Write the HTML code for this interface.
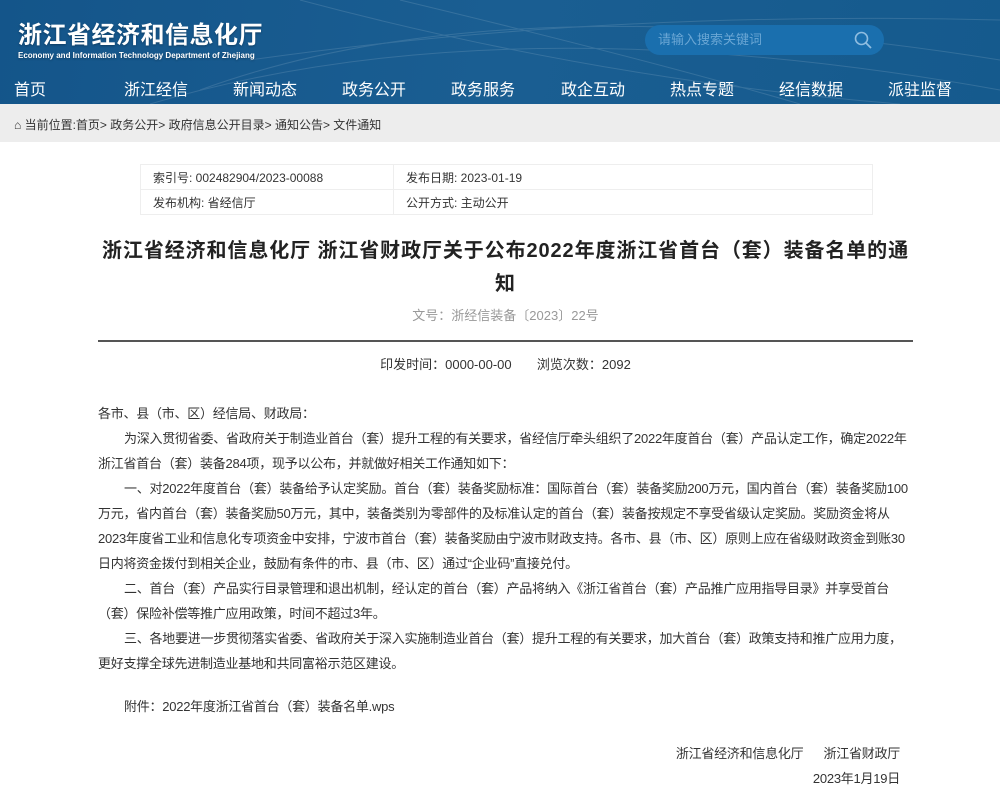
<!DOCTYPE html>
<html><head><meta charset="utf-8"><style>
*{margin:0;padding:0;box-sizing:border-box}
body{width:1000px;height:805px;overflow:hidden;background:#fff;font-family:"Liberation Sans","Noto Sans CJK SC",sans-serif;color:#333}
.hd{height:104px;background:linear-gradient(100deg,#14558a 0%,#1a5e92 50%,#155a8d 100%);position:relative;overflow:hidden}
.logo{position:absolute;left:18px;top:15px;color:#fff;font-size:24px;font-weight:bold;letter-spacing:0.5px;text-shadow:0 1px 2px rgba(0,0,0,.3)}
.logo small{display:block;font-size:8px;font-weight:bold;letter-spacing:0;margin-top:1px}
.search{position:absolute;left:645px;top:25px;width:239px;height:30px;border-radius:15px;background:#1a6fae;color:#6aa6d4;font-size:13px;line-height:30px;padding-left:13px}
.search svg{position:absolute;right:12px;top:6px}
.nav{position:absolute;top:76px;left:0;width:1000px;height:28px}
.nav span{position:absolute;color:#fff;font-size:16px;top:0}
.nav .on{border-bottom:3px solid #fff;padding-bottom:4px}
.bc{height:38px;background:#ededed;font-size:12px;line-height:42px;padding-left:14px;color:#333}
table{position:absolute;left:140px;top:164px;width:733px;border-collapse:collapse;font-size:12px}
td{border:1px solid #eee;height:25px;padding-left:12px;color:#333}
.t{position:absolute;left:98px;width:815px;text-align:center}
p{font-size:13px;line-height:25px;letter-spacing:-0.25px}
</style></head><body>
<div class="hd">
<svg width="1000" height="104" style="position:absolute;left:0;top:0;opacity:.12"><g fill="none" stroke="#fff" stroke-width="1"><path d="M200 90 Q500 -20 1000 60"/><path d="M150 104 Q500 0 1000 90"/><path d="M300 0 Q600 80 900 104"/><path d="M400 0 Q650 60 800 104"/><path d="M250 60 Q600 10 1000 20"/></g></svg>
<div class="logo">浙江省经济和信息化厅<small>Economy and Information Technology Department of Zhejiang</small></div>
<div class="search">请输入搜索关键词<svg width="18" height="18" viewBox="0 0 18 18"><circle cx="7.5" cy="7.5" r="6" fill="none" stroke="#8fbde0" stroke-width="1.6"/><path d="M12 12l5 5" stroke="#8fbde0" stroke-width="1.8"/></svg></div>
<div class="nav">
<span class="on" style="left:14px">首页</span>
<span style="left:124px">浙江经信</span><span style="left:233px">新闻动态</span><span style="left:342px">政务公开</span><span style="left:451px">政务服务</span><span style="left:561px">政企互动</span><span style="left:670px">热点专题</span><span style="left:779px">经信数据</span><span style="left:888px">派驻监督</span>
</div></div>
<div class="bc">⌂ 当前位置:首页&gt; 政务公开&gt; 政府信息公开目录&gt; 通知公告&gt; 文件通知</div>
<table><tr><td style="width:253px">索引号: 002482904/2023-00088</td><td>发布日期: 2023-01-19</td></tr><tr><td>发布机构: 省经信厅</td><td>公开方式: 主动公开</td></tr></table>
<div class="t" style="top:235px;font-size:20px;font-weight:bold;line-height:33px;color:#222;letter-spacing:0.9px">浙江省经济和信息化厅 浙江省财政厅关于公布2022年度浙江省首台（套）装备名单的通知</div>
<div class="t" style="top:305px;font-size:13px;color:#999">文号：浙经信装备〔2023〕22号</div>
<div style="position:absolute;left:98px;top:340px;width:815px;height:2px;background:#555"></div>
<div class="t" style="top:354px;font-size:13px;color:#333">印发时间：0000-00-00&nbsp;&nbsp;&nbsp;&nbsp;&nbsp;&nbsp;&nbsp;浏览次数：2092</div>
<div style="position:absolute;left:98px;top:401px;width:815px">
<p>各市、县（市、区）经信局、财政局：</p>
<p style="text-indent:26px">为深入贯彻省委、省政府关于制造业首台（套）提升工程的有关要求，省经信厅牵头组织了2022年度首台（套）产品认定工作，确定2022年浙江省首台（套）装备284项，现予以公布，并就做好相关工作通知如下：</p>
<p style="text-indent:26px">一、对2022年度首台（套）装备给予认定奖励。首台（套）装备奖励标准：国际首台（套）装备奖励200万元，国内首台（套）装备奖励100万元，省内首台（套）装备奖励50万元，其中，装备类别为零部件的及标准认定的首台（套）装备按规定不享受省级认定奖励。奖励资金将从2023年度省工业和信息化专项资金中安排，宁波市首台（套）装备奖励由宁波市财政支持。各市、县（市、区）原则上应在省级财政资金到账30日内将资金拨付到相关企业，鼓励有条件的市、县（市、区）通过“企业码”直接兑付。</p>
<p style="text-indent:26px">二、首台（套）产品实行目录管理和退出机制，经认定的首台（套）产品将纳入《浙江省首台（套）产品推广应用指导目录》并享受首台（套）保险补偿等推广应用政策，时间不超过3年。</p>
<p style="text-indent:26px">三、各地要进一步贯彻落实省委、省政府关于深入实施制造业首台（套）提升工程的有关要求，加大首台（套）政策支持和推广应用力度，更好支撑全球先进制造业基地和共同富裕示范区建设。</p>
<p style="margin-top:18px;text-indent:26px">附件：2022年度浙江省首台（套）装备名单.wps</p>
<p style="margin-top:22px;text-align:right;padding-right:13px">浙江省经济和信息化厅&nbsp;&nbsp;&nbsp;&nbsp;&nbsp;&nbsp;浙江省财政厅</p>
<p style="text-align:right;padding-right:13px">2023年1月19日</p>
</div>
</body></html>
